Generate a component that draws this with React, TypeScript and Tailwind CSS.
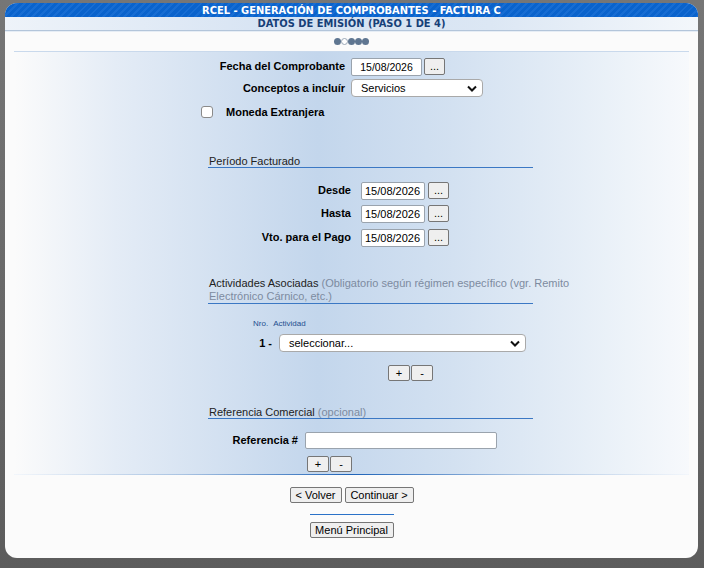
import React from "react";

const sans = "font-['Liberation_Sans',Arial,sans-serif]";

function SmallButton({ label, className = "" }: { label: string; className?: string }) {
  return (
    <button
      type="button"
      className={`flex items-center justify-center bg-[#efefef] border border-[#767676] rounded-[2px] text-[11px] leading-none text-black ${className}`}
    >
      {label}
    </button>
  );
}

function DateInput({ value, width, centered }: { value: string; width: string; centered?: boolean }) {
  return (
    <input
      readOnly
      value={value}
      className={`${width} h-[18px] bg-white border border-[#9aa3ad] rounded-[2px] text-[11px] text-black px-[3px] outline-none ${
        centered ? "text-center" : ""
      }`}
    />
  );
}

function FakeSelect({ value, width }: { value: string; width: string }) {
  return (
    <div
      className={`${width} h-[18px] bg-white border border-[#a9a9a9] rounded-[4px] flex items-center justify-between pl-[9px] pr-[5px] text-[11px] text-black`}
    >
      <span>{value}</span>
      <svg width="10" height="7" viewBox="0 0 10 7">
        <path d="M1 1.5 L5 5.5 L9 1.5" fill="none" stroke="#111" strokeWidth="2" />
      </svg>
    </div>
  );
}

function SectionTitle({ children }: { children: React.ReactNode }) {
  return (
    <div className="ml-[194px] w-[325px] border-b border-[#3b78c4] pl-[1px] text-[11px] leading-[12px] text-[#222]">
      {children}
    </div>
  );
}

function PlusMinus({ className = "" }: { className?: string }) {
  return (
    <div className={`flex gap-[1px] ${className}`}>
      <SmallButton label="+" className="w-[22px] h-[16px]" />
      <SmallButton label="-" className="w-[22px] h-[16px]" />
    </div>
  );
}

function DateRow({ label, className = "" }: { label: string; className?: string }) {
  return (
    <div className={`flex items-center h-[18px] ${className}`}>
      <span className="w-[337px] text-right text-[11px] leading-[13px] font-bold text-black">{label}</span>
      <div className="ml-[10px]">
        <DateInput value="15/08/2026" width="w-[64px]" />
      </div>
      <SmallButton label="..." className="ml-[3px] w-[21px] h-[17px]" />
    </div>
  );
}

export default function App() {
  return (
    <div className={`h-[568px] w-[704px] bg-[linear-gradient(180deg,#767676,#5c5c5c)] pt-[3px] pl-[5px] ${sans}`}>
      <div className="w-[693px] h-[555px] bg-[#fbfbfb] rounded-[12px] overflow-hidden flex flex-col">
        {/* title bar */}
        <div className="h-[14px] bg-[repeating-linear-gradient(135deg,#0a63cc_0px,#0a63cc_3px,#176dd3_3px,#176dd3_5px)] flex items-center justify-center">
          <span className="font-['DejaVu_Sans_Condensed',Tahoma,sans-serif] font-bold text-[11px] leading-none text-white">
            RCEL - GENERACIÓN DE COMPROBANTES - FACTURA C
          </span>
        </div>
        <div className="h-[13px] bg-[linear-gradient(90deg,#eef3f9,#d3e1f2_45%,#dce7f4_70%,#f3f7fb)] flex items-center justify-center">
          <span className="font-['DejaVu_Sans_Condensed',Tahoma,sans-serif] font-bold text-[11px] leading-none text-[#163f78]">
            DATOS DE EMISIÓN (PASO 1 DE 4)
          </span>
        </div>
        <div className="h-[1px] bg-[#b3c5da]" />
        <div className="h-[1px] bg-[#e6edf5]" />

        {/* step dots */}
        <div className="h-[19px] flex items-center justify-center">
          <div className="flex">
            <span className="w-[7px] h-[7px] rounded-full bg-[#5f7691]" />
            <span className="w-[7px] h-[7px] rounded-full bg-white border border-[#9aa7b6]" />
            <span className="w-[7px] h-[7px] rounded-full bg-[#5f7691]" />
            <span className="w-[7px] h-[7px] rounded-full bg-[#5f7691]" />
            <span className="w-[7px] h-[7px] rounded-full bg-[#5f7691]" />
          </div>
        </div>

        {/* main form */}
        <div className="mx-[9px] h-[424px] border-t border-[#c9d9ec] bg-[linear-gradient(90deg,#fbfbfb_0%,#e4ecf6_15%,#c3d6ec_45%,#d3e1f1_65%,#eaf1f8_88%,#f7f9fc_100%)] flex flex-col">
          <div className="flex items-center h-[18px] mt-[5px]">
            <span className="w-[331px] text-right text-[11px] font-bold text-black">Fecha del Comprobante</span>
            <div className="ml-[6px]">
              <input
                readOnly
                value="15/08/2026"
                className="w-[71px] h-[18px] bg-white border border-[#9aa3ad] rounded-[2px] text-[10.5px] text-black text-center outline-none"
              />
            </div>
            <SmallButton label="..." className="ml-[2px] w-[21px] h-[17px]" />
          </div>
          <div className="flex items-center h-[18px] mt-[4px]">
            <span className="w-[331px] text-right text-[11px] font-bold text-black">Conceptos a incluír</span>
            <div className="ml-[6px]">
              <FakeSelect value="Servicios" width="w-[132px]" />
            </div>
          </div>
          <div className="flex items-center h-[12px] mt-[9px] ml-[187px]">
            <span className="w-[12px] h-[12px] bg-white border border-[#8a8a8a] rounded-[3px]" />
            <span className="ml-[13px] text-[11px] font-bold text-black">Moneda Extranjera</span>
          </div>

          <div className="mt-[37px]">
            <SectionTitle>Período Facturado</SectionTitle>
          </div>
          <DateRow label="Desde" className="mt-[13px]" />
          <DateRow label="Hasta" className="mt-[5px]" />
          <DateRow label="Vto. para el Pago" className="mt-[6px]" />

          <div className="mt-[31px] ml-[194px]">
            <div className="w-[372px] text-[11px] leading-[13px] text-[#222] pl-[1px]">
              Actividades Asociadas{" "}
              <span className="text-[#7d8ba0]">
                (Obligatorio según régimen específico (vgr. Remito Electrónico Cárnico, etc.)
              </span>
            </div>
            <div className="w-[325px] h-[1px] bg-[#3b78c4]" />
          </div>

          <div className="mt-[15px] ml-[239px] flex gap-[5px] text-[8px] leading-[9px] text-[#1f4f8f]">
            <span>Nro.</span>
            <span>Actividad</span>
          </div>
          <div className="mt-[6px] flex items-center h-[18px]">
            <span className="w-[258px] text-right text-[11px] font-bold text-black">1 -</span>
            <div className="ml-[7px]">
              <FakeSelect value="seleccionar..." width="w-[247px]" />
            </div>
          </div>
          <PlusMinus className="mt-[13px] ml-[374px]" />

          <div className="mt-[25px]">
            <SectionTitle>
              Referencia Comercial <span className="text-[#7d8ba0]">(opcional)</span>
            </SectionTitle>
          </div>
          <div className="mt-[13px] flex items-center h-[17px]">
            <span className="w-[284px] text-right text-[11px] font-bold text-black">Referencia #</span>
            <input
              readOnly
              value=""
              className="ml-[7px] w-[192px] h-[17px] bg-white border border-[#9aa3ad] rounded-[2px] outline-none"
            />
          </div>
          <PlusMinus className="mt-[7px] ml-[293px]" />

          <div className="mt-auto h-[1px] bg-[linear-gradient(90deg,#f2f6fb,#a9c3e2_25%,#1e63b8_50%,#a9c3e2_75%,#f2f6fb)]" />
        </div>

        {/* bottom actions */}
        <div className="mt-[12px] flex justify-center gap-[3px]">
          <SmallButton label="< Volver" className="w-[52px] h-[16px]" />
          <SmallButton label="Continuar >" className="w-[69px] h-[16px]" />
        </div>
        <div className="mt-[11px] flex justify-center">
          <div className="w-[84px] h-[1px] bg-[#2b72c8]" />
        </div>
        <div className="mt-[7px] flex justify-center">
          <SmallButton label="Menú Principal" className="w-[84px] h-[16px]" />
        </div>
      </div>
    </div>
  );
}
